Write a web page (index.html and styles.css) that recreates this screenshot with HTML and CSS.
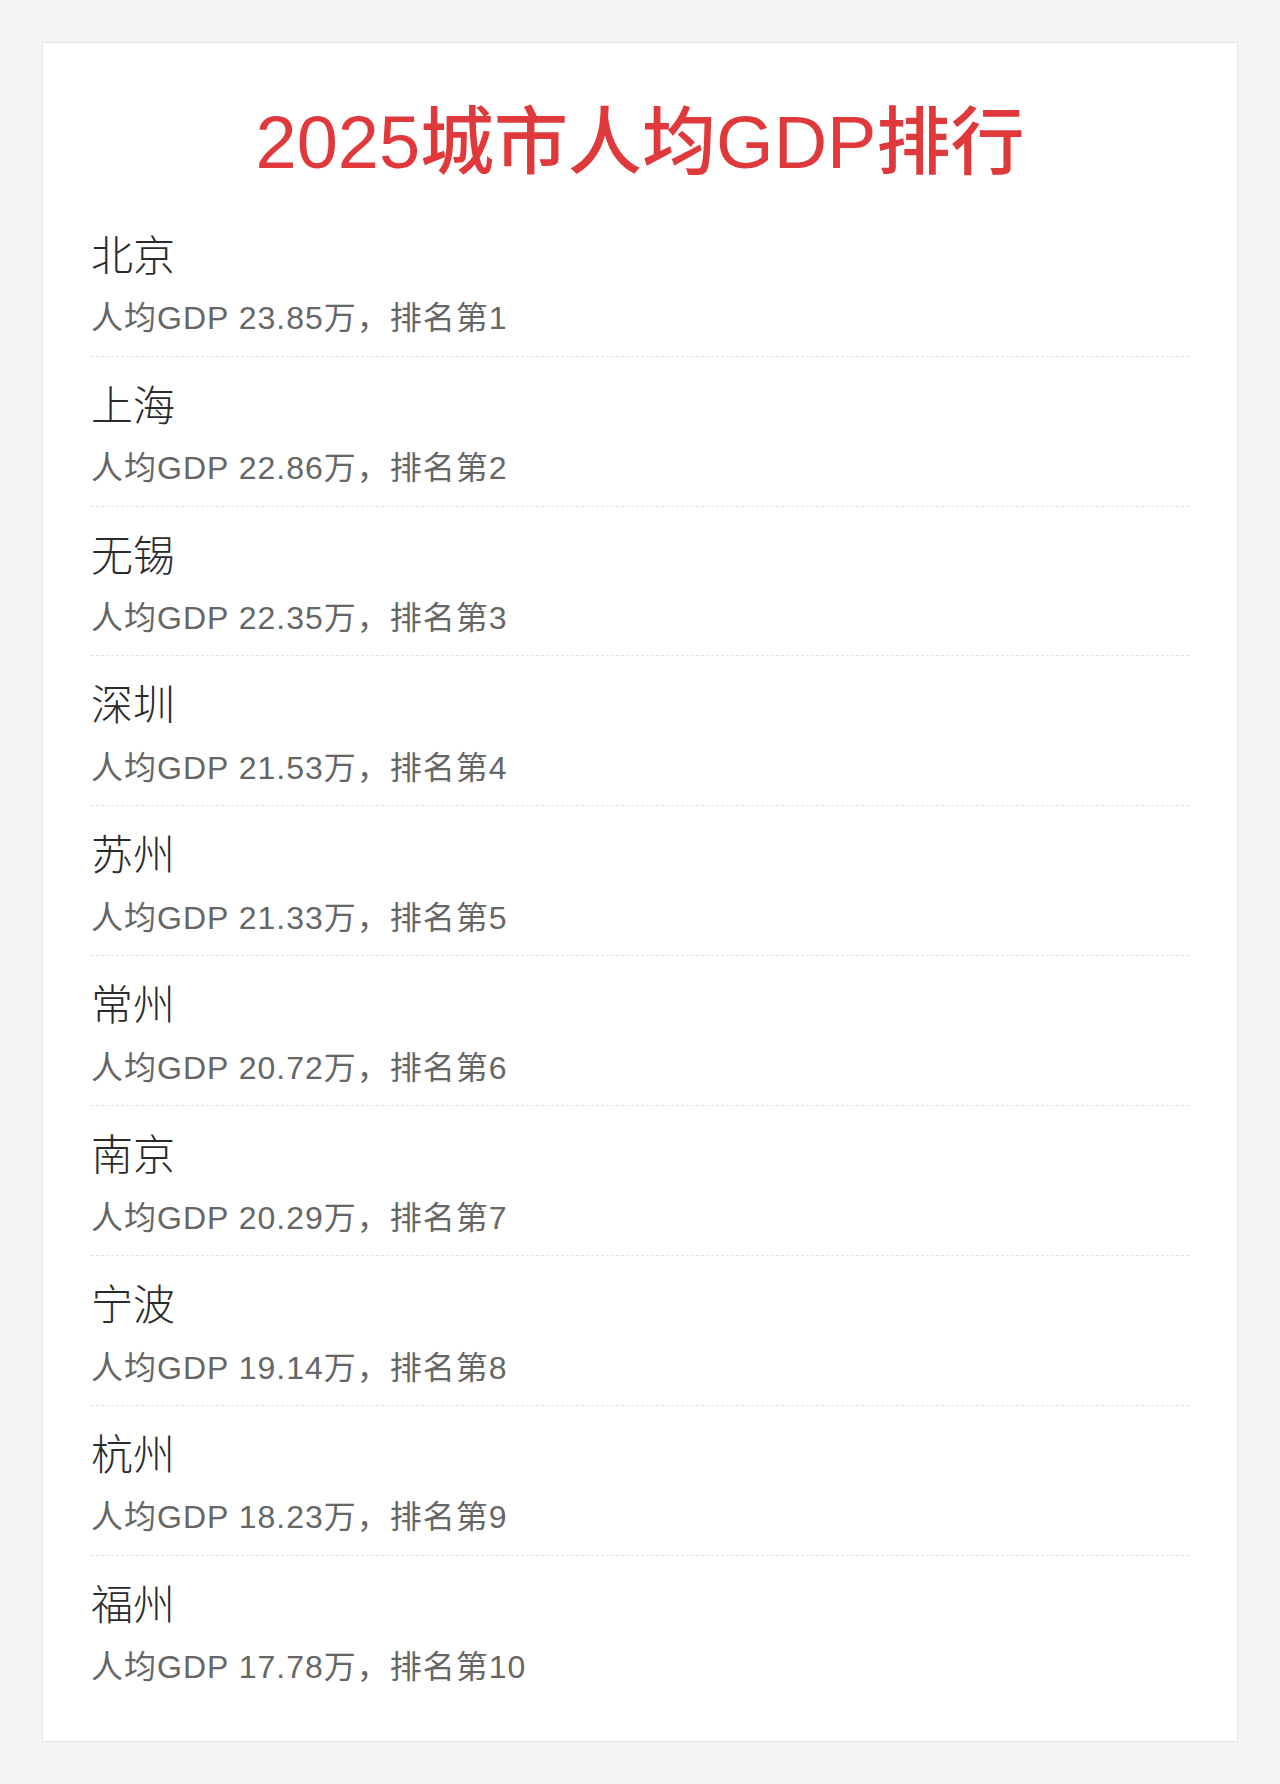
FILE: index.html
```html
<!DOCTYPE html>
<html lang="zh-CN">
<head>
  <meta charset="UTF-8">
  <meta name="viewport" content="width=device-width, initial-scale=1.0">
  <title>2025城市人均GDP排行</title>
  <link rel="stylesheet" href="styles.css">
</head>
<body>
  <!-- Ranking Card -->
  <div class="card">
    <h1 class="title">2025城市人均GDP排行</h1>

    <ul class="rank-list">
      <li class="rank-item">
        <div class="city">北京</div>
        <div class="info">人均GDP 23.85万，排名第1</div>
      </li>
      <li class="rank-item">
        <div class="city">上海</div>
        <div class="info">人均GDP 22.86万，排名第2</div>
      </li>
      <li class="rank-item">
        <div class="city">无锡</div>
        <div class="info">人均GDP 22.35万，排名第3</div>
      </li>
      <li class="rank-item">
        <div class="city">深圳</div>
        <div class="info">人均GDP 21.53万，排名第4</div>
      </li>
      <li class="rank-item">
        <div class="city">苏州</div>
        <div class="info">人均GDP 21.33万，排名第5</div>
      </li>
      <li class="rank-item">
        <div class="city">常州</div>
        <div class="info">人均GDP 20.72万，排名第6</div>
      </li>
      <li class="rank-item">
        <div class="city">南京</div>
        <div class="info">人均GDP 20.29万，排名第7</div>
      </li>
      <li class="rank-item">
        <div class="city">宁波</div>
        <div class="info">人均GDP 19.14万，排名第8</div>
      </li>
      <li class="rank-item">
        <div class="city">杭州</div>
        <div class="info">人均GDP 18.23万，排名第9</div>
      </li>
      <li class="rank-item">
        <div class="city">福州</div>
        <div class="info">人均GDP 17.78万，排名第10</div>
      </li>
    </ul>
  </div>
</body>
</html>
```

FILE: styles.css
```css
/* Global Styles */
body {
  font-family: "Liberation Sans", "Noto Sans CJK SC", sans-serif;
  background-color: #f4f4f4;
  color: #333;
  margin: 0;
  padding: 42px;
}

/* Card */
.card {
  box-sizing: border-box;
  background-color: #fff;
  border: 1px solid #e4e4e4;
  padding: 56px 48px 30px;
  min-height: 1700px;
}

/* Title */
.title {
  font-size: 74px;
  font-weight: 500;
  color: #e0393c;
  text-align: center;
  line-height: 1.2;
  margin: 0 0 19px;
}

/* List */
.rank-list {
  list-style: none;
  margin: 0;
  padding: 0;
}

.rank-item {
  padding: 23px 0 15.7px;
  border-bottom: 1px dashed #e2e2e2;
}

.rank-item:last-child {
  border-bottom: none;
}

.city {
  font-size: 42px;
  font-weight: 300;
  color: #2b2b2b;
  line-height: 1.3;
}

.info {
  font-size: 32px;
  color: #666;
  line-height: 1.3;
  letter-spacing: 1px;
  margin-top: 14px;
}
```
